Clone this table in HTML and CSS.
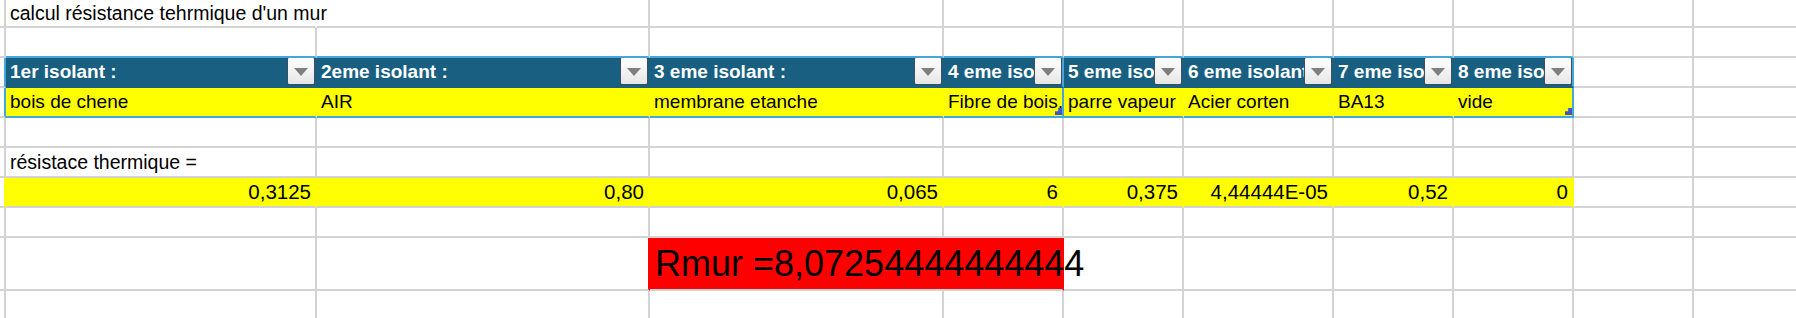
FILE: index.html
```html
<!DOCTYPE html>
<html lang="fr">
<head>
<meta charset="utf-8">
<title>calcul résistance thermique</title>
<link rel="stylesheet" href="styles.css">
</head>
<body>
<div class="sheet">
  <div class="row r-short">
    <div class="c g"></div>
    <div class="c spill no-r">calcul résistance tehrmique d'un mur</div>
    <div class="c"></div><div class="c"></div><div class="c"></div><div class="c"></div><div class="c"></div><div class="c"></div><div class="c"></div><div class="c"></div><div class="c"></div>
  </div>
  <div class="row">
    <div class="c g"></div>
    <div class="c tb-top"></div><div class="c tb-top"></div><div class="c tb-top"></div><div class="c tb-top"></div><div class="c tb-top"></div><div class="c tb-top"></div><div class="c tb-top"></div><div class="c tb-top"></div>
    <div class="c"></div><div class="c"></div>
  </div>
  <div class="row">
    <div class="c g tb-left"></div>
    <div class="c th">1er isolant :<span class="flt"></span></div>
    <div class="c th">2eme isolant :<span class="flt"></span></div>
    <div class="c th">3 eme isolant :<span class="flt"></span></div>
    <div class="c th tb-end">4 eme isolant :<span class="flt"></span></div>
    <div class="c th">5 eme isolant :<span class="flt"></span></div>
    <div class="c th">6 eme isolant :<span class="flt"></span></div>
    <div class="c th">7 eme isolant :<span class="flt"></span></div>
    <div class="c th tb-end">8 eme isolant :<span class="flt"></span></div>
    <div class="c"></div><div class="c"></div>
  </div>
  <div class="row">
    <div class="c g tb-left"></div>
    <div class="c td">bois de chene</div>
    <div class="c td">AIR</div>
    <div class="c td">membrane etanche</div>
    <div class="c td tb-end">Fibre de bois,<span class="handle"></span></div>
    <div class="c td">parre vapeur</div>
    <div class="c td">Acier corten</div>
    <div class="c td">BA13</div>
    <div class="c td tb-end">vide<span class="handle"></span></div>
    <div class="c"></div><div class="c"></div>
  </div>
  <div class="row">
    <div class="c g"></div>
    <div class="c"></div><div class="c"></div><div class="c"></div><div class="c"></div><div class="c"></div><div class="c"></div><div class="c"></div><div class="c"></div><div class="c"></div><div class="c"></div>
  </div>
  <div class="row">
    <div class="c g"></div>
    <div class="c">résistace thermique =</div>
    <div class="c"></div><div class="c"></div><div class="c"></div><div class="c"></div><div class="c"></div><div class="c"></div><div class="c"></div><div class="c"></div><div class="c"></div>
  </div>
  <div class="row">
    <div class="c g y-r"></div>
    <div class="c num">0,3125</div>
    <div class="c num">0,80</div>
    <div class="c num">0,065</div>
    <div class="c num">6</div>
    <div class="c num">0,375</div>
    <div class="c num">4,44444E-05</div>
    <div class="c num">0,52</div>
    <div class="c num">0</div>
    <div class="c"></div><div class="c"></div>
  </div>
  <div class="row">
    <div class="c g"></div>
    <div class="c"></div><div class="c"></div><div class="c"></div><div class="c"></div><div class="c"></div><div class="c"></div><div class="c"></div><div class="c"></div><div class="c"></div><div class="c"></div>
  </div>
  <div class="row r-tall">
    <div class="c g"></div>
    <div class="c"></div>
    <div class="c red-r"></div>
    <div class="c result spill">Rmur =8,07254444444444</div>
    <div class="c"></div><div class="c"></div><div class="c"></div><div class="c"></div><div class="c"></div><div class="c"></div>
  </div>
  <div class="row">
    <div class="c g"></div>
    <div class="c"></div><div class="c"></div><div class="c"></div><div class="c"></div><div class="c"></div><div class="c"></div><div class="c"></div><div class="c"></div><div class="c"></div><div class="c"></div>
  </div>
</div>
</body>
</html>
```

FILE: styles.css
```css
html, body {
  margin: 0;
  padding: 0;
  background: #ffffff;
  overflow: hidden;
}

body {
  width: 1796px;
  height: 318px;
  font-family: "Liberation Sans", Arial, sans-serif;
  color: #000000;
}

.sheet {
  --grid: #d3d3d3;
  --head: #195f82;
  --edge: #45a6dc;
  --yellow: #ffff00;
  --red: #ff0000;
  display: flex;
  flex-direction: column;
  width: 1814px;
}

.row {
  display: grid;
  grid-template-columns: 6px 311px 333px 294px 120px 120px 150px 120px 120px 120px 120px;
  height: 30px;
}

.r-short { height: 28px; }
.r-tall { height: 53px; }

.c {
  box-sizing: border-box;
  border-right: 2px solid var(--grid);
  border-bottom: 2px solid var(--grid);
  padding: 0 4px;
  display: flex;
  align-items: center;
  white-space: nowrap;
  overflow: hidden;
  font-size: 19.5px;
  min-width: 0;
}

.g { padding: 0; }

.spill { overflow: visible; }
.no-r { border-right-color: transparent; }

.tb-top { border-bottom-color: var(--edge); }
.tb-left { border-right-color: var(--edge); }

.th {
  position: relative;
  background: var(--head);
  color: #ffffff;
  font-weight: bold;
  font-size: 19px;
  border-right-color: var(--head);
  border-bottom-color: var(--head);
}

.td {
  position: relative;
  background: var(--yellow);
  border-right-color: var(--yellow);
  border-bottom-color: var(--edge);
  font-size: 19px;
}

.th.tb-end, .td.tb-end { border-right-color: var(--edge); }

.flt {
  position: absolute;
  top: -1px;
  right: 0;
  width: 28px;
  height: 28px;
  box-sizing: border-box;
  border: 1px solid #3d4f5c;
  border-radius: 2px;
  background: linear-gradient(#ffffff, #e6e6e6);
  display: flex;
  align-items: center;
  justify-content: center;
}

.flt::after {
  content: "";
  width: 0;
  height: 0;
  border-left: 7px solid transparent;
  border-right: 7px solid transparent;
  border-top: 8px solid #7f7f7f;
  margin-top: 2px;
}

.handle {
  position: absolute;
  right: 0;
  bottom: 1px;
  width: 7px;
  height: 7px;
  background: #4257c4;
  clip-path: polygon(45% 0, 100% 0, 100% 100%, 0 100%, 0 45%, 45% 45%);
}

.y-r { border-right-color: var(--yellow); }

.num {
  background: var(--yellow);
  border-right-color: var(--yellow);
  justify-content: flex-end;
  font-size: 20.5px;
}

.red-r { border-right-color: var(--red); }

.result {
  grid-column: span 2;
  background: var(--red);
  border-right-color: var(--red);
  font-size: 36px;
  padding-left: 5px;
}
```
